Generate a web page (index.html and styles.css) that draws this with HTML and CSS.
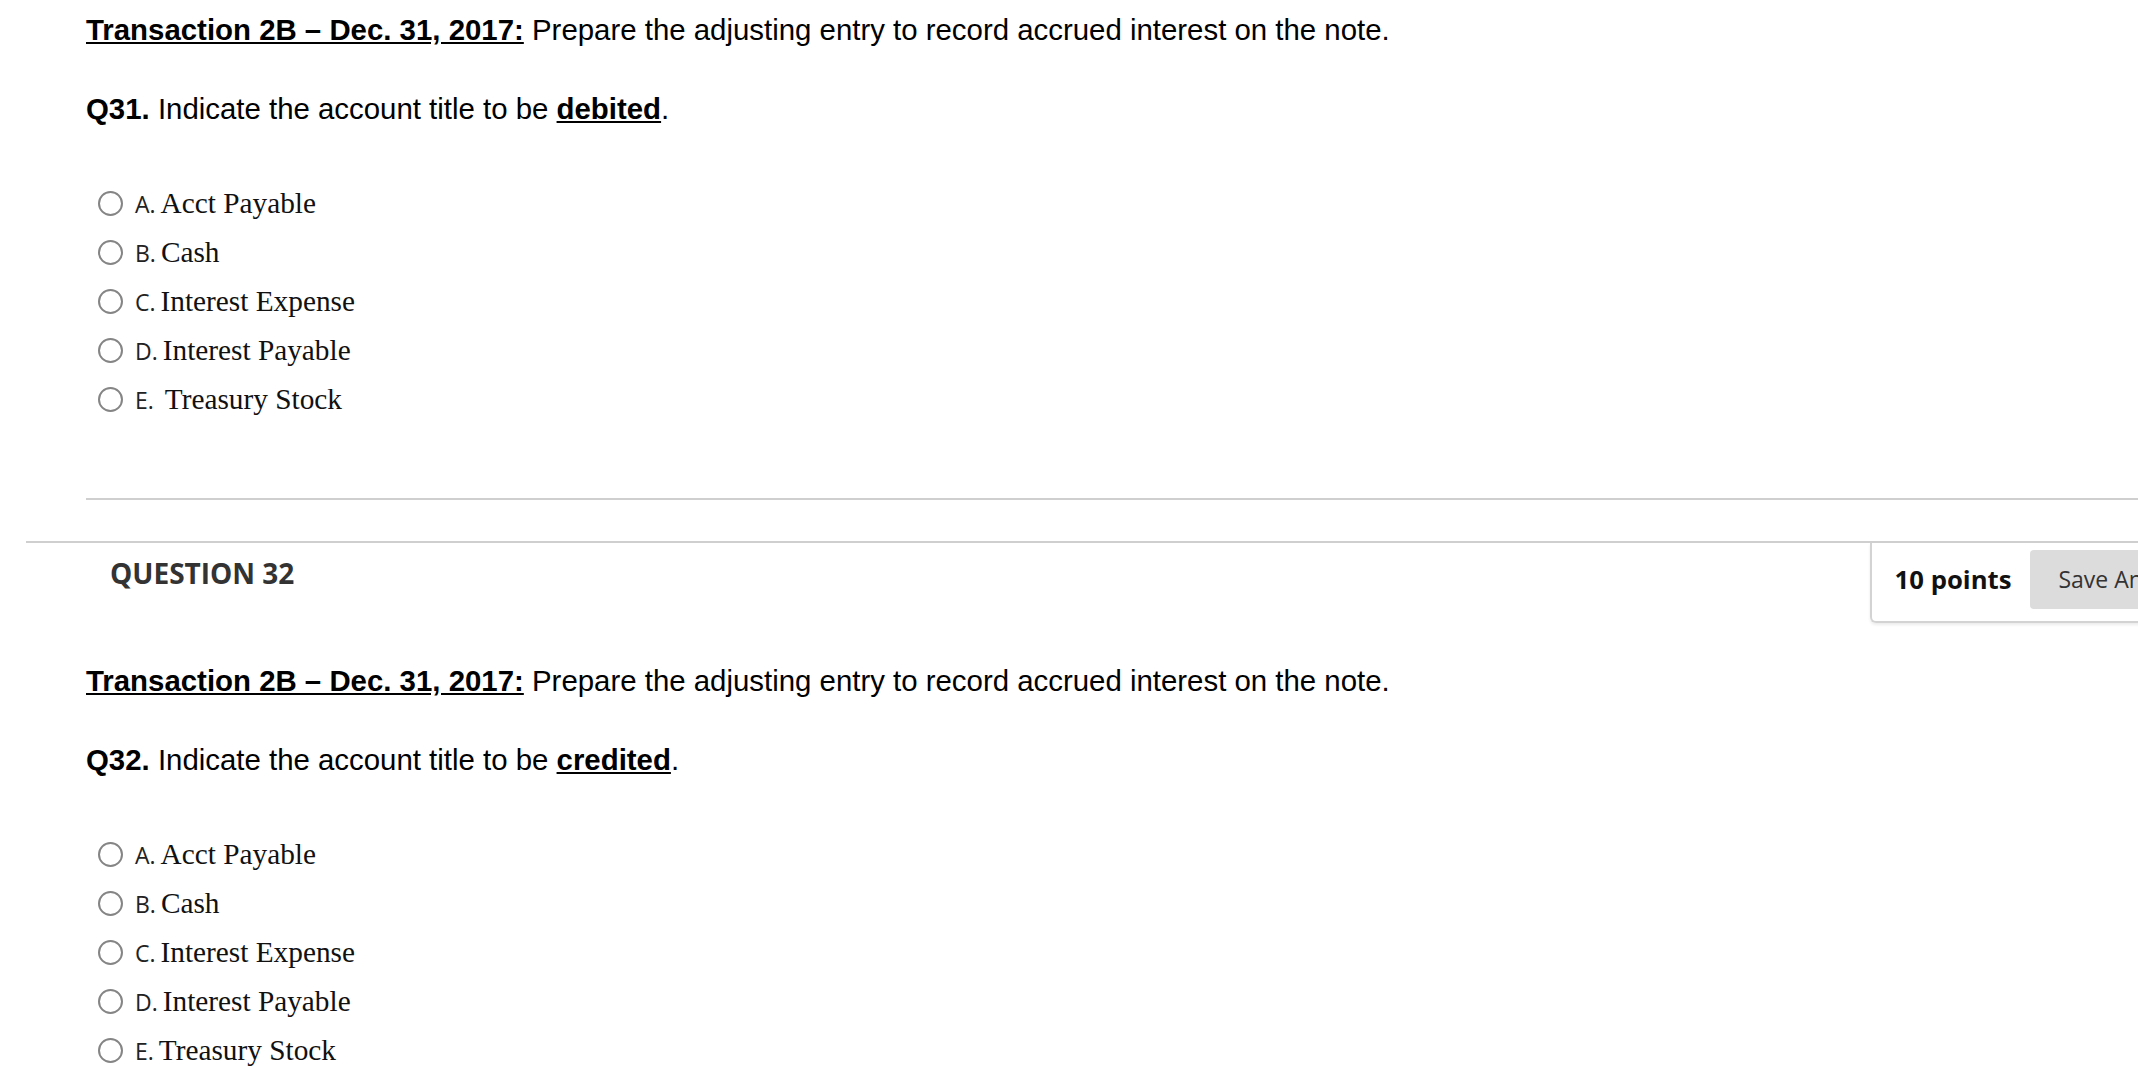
FILE: index.html
```html
<!DOCTYPE html>
<html>
<head>
<meta charset="utf-8">
<link rel="stylesheet" href="styles.css">
<title>Quiz</title>
</head>
<body>
<div class="page">
  <div class="q-body q-body-first">
    <p class="stem"><span class="hl">Transaction 2B – Dec. 31, 2017:</span> Prepare the adjusting entry to record accrued interest on the note.</p>
    <p class="ask"><b>Q31.</b> Indicate the account title to be <span class="hl">debited</span>.</p>
    <div class="options">
      <div class="option"><span class="radio"></span><span class="lbl">A.</span><span class="ans">Acct Payable</span></div>
      <div class="option"><span class="radio"></span><span class="lbl">B.</span><span class="ans">Cash</span></div>
      <div class="option"><span class="radio"></span><span class="lbl">C.</span><span class="ans">Interest Expense</span></div>
      <div class="option"><span class="radio"></span><span class="lbl">D.</span><span class="ans">Interest Payable</span></div>
      <div class="option"><span class="radio"></span><span class="lbl">E.</span><span class="ans ans-wide">Treasury Stock</span></div>
    </div>
    <div class="rule"></div>
  </div>

  <div class="question">
    <div class="q-head">
      <h2 class="q-title">QUESTION 32</h2>
      <div class="points">
        <span class="pts">10 points</span>
        <span class="save">Save Answer</span>
      </div>
    </div>
    <div class="q-body">
      <p class="stem"><span class="hl">Transaction 2B – Dec. 31, 2017:</span> Prepare the adjusting entry to record accrued interest on the note.</p>
      <p class="ask"><b>Q32.</b> Indicate the account title to be <span class="hl">credited</span>.</p>
      <div class="options">
        <div class="option"><span class="radio"></span><span class="lbl">A.</span><span class="ans">Acct Payable</span></div>
        <div class="option"><span class="radio"></span><span class="lbl">B.</span><span class="ans">Cash</span></div>
        <div class="option"><span class="radio"></span><span class="lbl">C.</span><span class="ans">Interest Expense</span></div>
        <div class="option"><span class="radio"></span><span class="lbl">D.</span><span class="ans">Interest Payable</span></div>
        <div class="option"><span class="radio"></span><span class="lbl">E.</span><span class="ans">Treasury Stock</span></div>
      </div>
    </div>
  </div>
</div>
</body>
</html>
```
FILE: styles.css
```css
html, body {
  margin: 0;
  padding: 0;
  background: #fff;
  overflow: hidden;
}
.page {
  width: 2222px;
  padding-top: 12px;
}
.q-body {
  padding-left: 86px;
}
.stem, .ask {
  margin: 0;
  font-family: "Liberation Sans", Arial, sans-serif;
  font-size: 29.4px;
  line-height: 35px;
  color: #000;
}
.ask {
  margin-top: 44px;
}
.hl {
  font-weight: bold;
  text-decoration: underline;
}
.options {
  margin-top: 53px;
}
.option {
  display: flex;
  align-items: center;
  height: 49px;
}
.radio {
  width: 25px;
  height: 25px;
  box-sizing: border-box;
  border: 2px solid #858585;
  border-radius: 50%;
  margin-left: 12px;
  margin-right: 12px;
  flex: none;
}
.lbl {
  font-family: "Open Sans", sans-serif;
  font-size: 23px;
  color: #222;
  margin-right: 5px;
}
.ans {
  font-family: "Liberation Serif", "Times New Roman", serif;
  font-size: 29.3px;
  color: #111;
}
.ans-wide {
  margin-left: 6px;
}
.rule {
  margin-top: 74px;
  border-top: 2px solid #cfcfcf;
}
.question {
  margin-top: 41px;
  margin-left: 26px;
}
.q-head {
  display: flex;
  justify-content: space-between;
  align-items: flex-start;
  border-top: 2px solid #cfcfcf;
}
.q-title {
  margin: 0;
  padding: 12px 0 0 84px;
  font-family: "Open Sans", sans-serif;
  font-weight: bold;
  font-size: 28px;
  line-height: 36px;
  color: #333;
}
.points {
  display: flex;
  align-items: center;
  gap: 19px;
  height: 80px;
  box-sizing: border-box;
  padding: 4px 0 10px 23px;
  border-left: 2px solid #d3d3d3;
  border-bottom: 2px solid #d3d3d3;
  border-bottom-left-radius: 6px;
  box-shadow: 0 2px 3px rgba(0, 0, 0, 0.08);
}
.pts {
  font-family: "Open Sans", sans-serif;
  font-weight: bold;
  font-size: 25.7px;
  color: #111;
}
.save {
  display: flex;
  align-items: center;
  height: 59px;
  padding: 0 28px;
  background: #dcdcdc;
  border-radius: 4px;
  font-family: "Open Sans", sans-serif;
  font-size: 23px;
  color: #333;
}
.question .q-body {
  padding-left: 60px;
  padding-top: 40px;
}
```
